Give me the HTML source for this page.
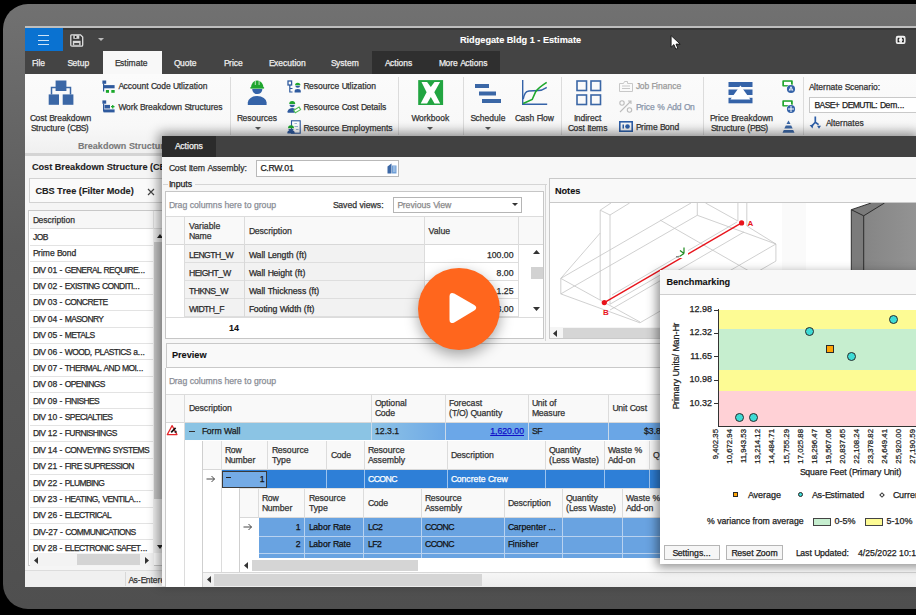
<!DOCTYPE html>
<html><head><meta charset="utf-8">
<style>
*{box-sizing:border-box;margin:0;padding:0}
html,body{width:916px;height:615px;overflow:hidden;background:#000}
body{position:relative;font-family:"Liberation Sans",sans-serif;font-size:8.5px;color:#222}
.a{position:absolute}
.t{position:absolute;white-space:nowrap;line-height:1;-webkit-text-stroke:0.25px currentColor}
svg.a{overflow:visible}
.u{letter-spacing:-0.6px}
[style*="bold"] .u{letter-spacing:-0.15px}
.t[style*="bold"]{-webkit-text-stroke:0.1px currentColor}
</style></head><body>
<div class="a" style="left:3px;top:4px;width:960px;height:605px;border-radius:25px;background:linear-gradient(#717171,#5a5a5a 40%,#4f4f4f)"></div>
<div class="a" style="left:25px;top:26px;width:891px;height:560px;background:#f2f2f2"></div>
<!-- title bar -->
<div class="a" style="left:25px;top:25.5px;width:891px;height:2.7px;background:#bebebe"></div>
<div class="a" style="left:25px;top:28px;width:891px;height:47px;background:#444"></div>
<div class="a" style="left:25px;top:28px;width:891px;height:1.8px;background:#373737"></div>
<div class="a" style="left:25px;top:28px;width:38px;height:23px;background:#0a72d1"></div>
<div class="a" style="left:38px;top:35px;width:11px;height:1.3px;background:#cfe4f7"></div>
<div class="a" style="left:38px;top:39.5px;width:11px;height:1.3px;background:#cfe4f7"></div>
<div class="a" style="left:38px;top:44px;width:11px;height:1.3px;background:#cfe4f7"></div>
<svg class="a" style="left:69.5px;top:33.5px" width="14" height="13" viewBox="0 0 14 13"><path d="M1.5 0.8H10.5L12.7 3V11Q12.7 12.2 11.5 12.2H2Q0.8 12.2 0.8 11V2Q0.8 0.8 1.5 0.8Z" fill="#3a3a3a" stroke="#e0e0e0" stroke-width="1.3"/><rect x="3.3" y="1.2" width="6" height="3.6" fill="#d8d8d8"/><circle cx="5.6" cy="2.9" r="1" fill="#111"/><rect x="2.8" y="6.8" width="7.8" height="4.8" fill="#d8d8d8"/><rect x="4.2" y="9.2" width="5" height="1.5" fill="#222"/></svg>
<svg class="a" style="left:98px;top:38px" width="6" height="4"><path d="M0 0h6l-3 3z" fill="#bbb"/></svg>
<div class="t" style="left:460px;top:36px;font-weight:bold;color:#fff;font-size:9.2px"><span class="u">R</span>idgegate <span class="u">B</span>ldg 1 - <span class="u">E</span>stimate</div>
<svg class="a" style="left:670px;top:35px" width="12" height="16" viewBox="0 0 12 16"><path d="M1.1 0.6V12.2L3.9 9.6L5.8 14.2L7.8 13.3L6 9.1H10.2Z" fill="#fff" stroke="#111" stroke-width="0.9" stroke-linejoin="round"/></svg>
<svg class="a" style="left:895px;top:35px" width="12" height="10" viewBox="0 0 12 10"><rect x="1.3" y="1.4" width="8.7" height="7.1" rx="1.5" fill="#e6e6e6" stroke="#f2f2f2" stroke-width="1.1"/><path d="M3.2 3.3v3.3h1.2M3.2 3.3h1.2M8.2 3.3v3.3h-1.2M8.2 3.3h-1.2" stroke="#1a1a1a" stroke-width="1.2" fill="none"/><circle cx="5.7" cy="4.6" r="0.8" fill="#fff"/></svg>
<!-- tabs -->
<div class="a" style="left:372px;top:51px;width:128px;height:23px;background:#2f2f2f"></div>
<div class="a" style="left:103px;top:51px;width:59px;height:24px;background:#f8f8f8"></div>
<div class="t" style="left:32px;top:59px;color:#eee"><span class="u">F</span>ile</div>
<div class="t" style="left:67.5px;top:59px;color:#eee"><span class="u">S</span>etup</div>
<div class="t" style="left:115px;top:59px;color:#333"><span class="u">E</span>stimate</div>
<div class="t" style="left:174px;top:59px;color:#eee"><span class="u">Q</span>uote</div>
<div class="t" style="left:224px;top:59px;color:#eee"><span class="u">P</span>rice</div>
<div class="t" style="left:269px;top:59px;color:#eee"><span class="u">E</span>xecution</div>
<div class="t" style="left:331px;top:59px;color:#eee"><span class="u">S</span>ystem</div>
<div class="t" style="left:385px;top:59px;color:#eee"><span class="u">A</span>ctions</div>
<div class="t" style="left:439px;top:59px;color:#eee"><span class="u">M</span>ore <span class="u">A</span>ctions</div>
<!-- ribbon -->
<div class="a" style="left:25px;top:74px;width:891px;height:80px;background:linear-gradient(#fbfbfb,#f8f8f8 65%,#efefef)"></div>
<div class="a" style="left:25px;top:153px;width:891px;height:2.5px;background:#d4d4d4"></div>
<!-- ribbon content -->
<div class="a" style="left:230px;top:77px;width:1px;height:58px;background:#dcdcdc"></div>
<div class="a" style="left:398px;top:77px;width:1px;height:58px;background:#dcdcdc"></div>
<div class="a" style="left:463px;top:77px;width:1px;height:58px;background:#dcdcdc"></div>
<div class="a" style="left:561px;top:77px;width:1px;height:58px;background:#dcdcdc"></div>
<div class="a" style="left:703px;top:77px;width:1px;height:58px;background:#dcdcdc"></div>
<div class="a" style="left:803px;top:77px;width:1px;height:58px;background:#dcdcdc"></div>
<!-- CBS icon -->
<svg class="a" style="left:48px;top:80px" width="26" height="26" viewBox="0 0 26 26" fill="#3b67a6"><rect x="7.6" y="0.5" width="10.8" height="10.5"/><path d="M3.5 14.5v-7h19v7" fill="none" stroke="#3b67a6" stroke-width="1.5"/><rect x="0.7" y="14.4" width="10.3" height="10.4"/><rect x="14.7" y="14.4" width="10.7" height="10.4"/></svg>
<div class="t" style="left:30px;top:114px;color:#333"><span class="u">C</span>ost <span class="u">B</span>reakdown</div>
<div class="t" style="left:31px;top:124px;color:#333"><span class="u">S</span>tructure (<span class="u">CBS</span>)</div>
<div class="t" style="left:78px;top:141.5px;color:#7a7a7a;font-weight:bold;font-size:9px"><span class="u">B</span>reakdown <span class="u">S</span>tructures</div>
<!-- small icons group1 -->
<svg class="a" style="left:102px;top:80px" width="14" height="14" viewBox="0 0 14 14"><rect x="0.4" y="0.5" width="3.8" height="3.3" fill="#2f5a9e"/><path d="M1.6 3.5v8" stroke="#2f5a9e" stroke-width="1.2"/><rect x="1.5" y="5.1" width="11.1" height="3.2" fill="#2f5a9e"/><rect x="3.9" y="10" width="3.1" height="2.8" fill="#1aa82a"/><rect x="9.3" y="10" width="3.4" height="2.8" fill="#1aa82a"/></svg>
<div class="t" style="left:118.5px;top:82px;color:#333"><span class="u">A</span>ccount <span class="u">C</span>ode <span class="u">U</span>tlization</div>
<svg class="a" style="left:102px;top:100px" width="14" height="14" viewBox="0 0 14 14"><rect x="0.4" y="0.4" width="3.8" height="3.3" fill="#2f5a9e"/><path d="M1.6 3.5v8" stroke="#2f5a9e" stroke-width="1.2"/><rect x="2.5" y="4.9" width="5.5" height="3.6" fill="#2f5a9e"/><path d="M9 6.7h3.5M10.75 5v3.4" stroke="#1aa82a" stroke-width="1.3"/><rect x="1.5" y="9.4" width="11.1" height="3" fill="#2f5a9e"/></svg>
<div class="t" style="left:118.5px;top:102.5px;color:#333"><span class="u">W</span>ork <span class="u">B</span>reakdown <span class="u">S</span>tructures</div>
<!-- resources -->
<svg class="a" style="left:246px;top:79px" width="22" height="27" viewBox="0 0 22 27"><path d="M4.8 9.2A6.4 7.8 0 0 1 17.6 9.2Z" fill="#1fa62e"/><path d="M9.3 2v4M13.1 2v4" stroke="#fff" stroke-width="0.7"/><rect x="4.3" y="8.2" width="13.8" height="1.3" fill="#1fa62e"/><path d="M6.2 10.1H16.4A5.1 5 0 0 1 6.2 10.1Z" fill="#3563a8"/><path d="M1.8 26V23.5A9.4 6.5 0 0 1 20.6 23.5V26Z" fill="#3563a8"/></svg>
<div class="t" style="left:237px;top:114px;color:#333"><span class="u">R</span>esources</div>
<svg class="a" style="left:254.5px;top:127px" width="6" height="4"><path d="M0 0h6l-3 3z" fill="#555"/></svg>
<svg class="a" style="left:287px;top:80px" width="14" height="13" viewBox="0 0 14 13"><rect x="1" y="1" width="3.6" height="4" fill="none" stroke="#2f5a9e" stroke-width="1.3"/><path d="M2.8 5v7h2.7M2.8 8.5h2.7" stroke="#2f5a9e" stroke-width="1.2" fill="none"/><path d="M8 5.2a2.7 2.5 0 0 1 5.4 0z" fill="#1fa62e"/><path d="M8.3 5.8h4.8a2.4 2 0 0 1-4.8 0z" fill="#2f5a9e"/><path d="M7.6 12.5v-1.3a3.1 2.3 0 0 1 6.2 0v1.3z" fill="#2f5a9e"/></svg>
<div class="t" style="left:303.5px;top:82px;color:#333"><span class="u">R</span>esource <span class="u">U</span>tlization</div>
<svg class="a" style="left:287px;top:100px" width="14" height="14" viewBox="0 0 14 14"><path d="M2.2 4a3 3 0 0 1 6 0z" fill="#1fa62e"/><path d="M2.6 4.8h5.2a2.6 2.4 0 0 1-5.2 0z" fill="#2f5a9e"/><path d="M0.6 12.8v-1.5a4.6 3.5 0 0 1 7-2.8v4.3z" fill="#2f5a9e"/><path d="M6.8 10.3l5.3-3.2 1.5 2.5-5.3 3.2z" fill="#fff" stroke="#4fbf52" stroke-width="1.1"/></svg>
<div class="t" style="left:303.5px;top:103px;color:#333"><span class="u">R</span>esource <span class="u">C</span>ost <span class="u">D</span>etails</div>
<svg class="a" style="left:287px;top:120px" width="14" height="14" viewBox="0 0 14 14"><rect x="4.5" y="0.8" width="8.7" height="12.4" fill="#fff" stroke="#2f5a9e" stroke-width="1.1"/><path d="M7.5 3.5h2.5M7.5 6.5h3.5M9 9.5h2.5" stroke="#7a9cc8" stroke-width="0.7"/><path d="M1 8.3a3 3 0 0 1 6 0z" fill="#1fa62e"/><path d="M1.4 9h5.2a2.6 2.2 0 0 1-5.2 0z" fill="#2f5a9e"/><path d="M0.4 13.6v-1a3.6 2.4 0 0 1 7.2 0v1z" fill="#2f5a9e"/></svg>
<div class="t" style="left:303.5px;top:123.5px;color:#333"><span class="u">R</span>esource <span class="u">E</span>mployments</div>
<!-- workbook -->
<svg class="a" style="left:418px;top:80px" width="26" height="25" viewBox="0 0 26 25"><rect x="0.2" y="0.1" width="24.9" height="24.9" fill="#22a541"/><path d="M3.5 2H9.1L12.8 7L16.5 2H22.1L16.3 12.2L22.2 23.4H16.5L12.8 16.9L9.1 23.4H2.7L8.6 12.2Z" fill="#fff"/></svg>
<div class="t" style="left:411.5px;top:114px;color:#333"><span class="u">W</span>orkbook</div>
<svg class="a" style="left:427px;top:127px" width="6" height="4"><path d="M0 0h6l-3 3z" fill="#555"/></svg>
<!-- schedule -->
<svg class="a" style="left:474px;top:82px" width="28" height="22"><rect x="1" y="2" width="14" height="4" fill="#3b67a6"/><rect x="5" y="9.5" width="17" height="4" fill="#3b67a6"/><rect x="8" y="17" width="19" height="4" fill="#3b67a6"/></svg>
<div class="t" style="left:470.5px;top:114px;color:#333"><span class="u">S</span>chedule</div>
<svg class="a" style="left:484.5px;top:127px" width="6" height="4"><path d="M0 0h6l-3 3z" fill="#555"/></svg>
<!-- cash flow -->
<svg class="a" style="left:521px;top:80px" width="27" height="26" viewBox="0 0 27 26"><path d="M1.7 0v24.3h24.5" stroke="#3563a8" stroke-width="1.4" fill="none"/><path d="M2.2 19C3.5 13.5 4.5 11.5 8 11L17.5 10.5C21 10.5 23 9 25.7 7.3" stroke="#3563a8" stroke-width="1.5" fill="none"/><path d="M2.2 23.5L11.2 19.5L14.8 11.5C17 8 20 6 25.7 2.3" stroke="#1ea82c" stroke-width="1.6" fill="none"/></svg>
<div class="t" style="left:515px;top:114px;color:#333"><span class="u">C</span>ash <span class="u">F</span>low</div>
<!-- indirect -->
<svg class="a" style="left:576px;top:80px" width="26" height="26" viewBox="0 0 26 26" fill="none" stroke="#3b67a6" stroke-width="1.6"><rect x="1" y="1" width="9.5" height="9.5"/><rect x="15" y="1" width="9.5" height="9.5"/><rect x="1" y="15" width="9.5" height="9.5"/><rect x="15" y="15" width="9.5" height="9.5"/></svg>
<div class="t" style="left:574px;top:114px;color:#333"><span class="u">I</span>ndirect</div>
<div class="t" style="left:568px;top:124px;color:#333"><span class="u">C</span>ost <span class="u">I</span>tems</div>
<!-- finance group -->
<svg class="a" style="left:619px;top:81px" width="14" height="11" viewBox="0 0 14 11" fill="none" stroke="#c8c8c8" stroke-width="1"><path d="M0.5 2.5h4l1-2h3v2h5v8h-13z"/><path d="M3 5h8M3 7.5h8"/></svg>
<div class="t" style="left:636px;top:82px;color:#9a9a9a"><span class="u">J</span>ob <span class="u">F</span>inance</div>
<svg class="a" style="left:619px;top:100px" width="14" height="13" viewBox="0 0 14 13" fill="none" stroke="#bdbdbd" stroke-width="1.1"><circle cx="3" cy="3" r="2.2"/><circle cx="10.5" cy="10" r="2.2"/><path d="M1 12l11-11M9 1h3v3"/></svg>
<div class="t" style="left:636px;top:102.5px;color:#8a96aa"><span class="u">P</span>rice % <span class="u">A</span>dd <span class="u">O</span>n</div>
<svg class="a" style="left:619px;top:121px" width="14" height="11" viewBox="0 0 14 11"><rect x="0.8" y="0.8" width="12.4" height="9.4" fill="none" stroke="#2d5ea8" stroke-width="1.6"/><rect x="3.5" y="3.5" width="1.5" height="4" fill="#2d5ea8"/><circle cx="8.5" cy="5.5" r="2.3" fill="#2d5ea8"/></svg>
<div class="t" style="left:636px;top:123px;color:#333"><span class="u">P</span>rime <span class="u">B</span>ond</div>
<!-- PBS -->
<svg class="a" style="left:728px;top:82px" width="25" height="22" viewBox="0 0 25 22"><rect x="0.5" y="0" width="24" height="5" fill="#3563a8"/><rect x="0.5" y="7.5" width="24" height="5.5" fill="#3563a8"/><rect x="0.5" y="15.8" width="24" height="5.5" fill="#3563a8"/><path d="M12.4 3.4L22.4 17.5H2.4Z" fill="#fff"/></svg>
<div class="t" style="left:710px;top:114px;color:#333"><span class="u">P</span>rice <span class="u">B</span>reakdown</div>
<div class="t" style="left:711px;top:124px;color:#333"><span class="u">S</span>tructure (<span class="u">PBS</span>)</div>
<svg class="a" style="left:782px;top:80px" width="14" height="14" viewBox="0 0 14 14"><rect x="0.3" y="0.3" width="10.5" height="6.3" rx="0.8" fill="#22a52f"/><rect x="2" y="1.8" width="7" height="3.3" fill="#fff"/><circle cx="9" cy="9" r="4.6" fill="#fff"/><circle cx="9" cy="9" r="4.1" fill="#3563a8"/><path d="M9 6l2.3 4.5H6.7z" fill="#fff"/><path d="M9 8v3.5" stroke="#3563a8" stroke-width="0.7"/></svg>
<svg class="a" style="left:782px;top:100px" width="14" height="14" viewBox="0 0 14 14"><rect x="0.3" y="0.3" width="10.5" height="6.3" rx="0.8" fill="#22a52f"/><rect x="2" y="1.8" width="7" height="3.3" fill="#fff"/><circle cx="9" cy="9" r="4.6" fill="#fff"/><circle cx="9" cy="9" r="4.1" fill="#3563a8"/><path d="M9 6v6M6 9h6" stroke="#fff" stroke-width="1"/></svg>
<svg class="a" style="left:782px;top:120px" width="13" height="13" viewBox="0 0 13 13"><path d="M6.5 0.5l2 3.5h-4z" fill="#3b67a6"/><path d="M3.8 5.5h5.4l1.5 3h-8.4z" fill="#3b67a6"/><path d="M1.8 10h9.4l1.3 2.8h-12z" fill="#3b67a6"/></svg>
<div class="t" style="left:809px;top:83px;color:#333"><span class="u">A</span>lternate <span class="u">S</span>cenario:</div>
<div class="a" style="left:809px;top:96.5px;width:120px;height:16px;background:#fff;border:1px solid #c9c9c9"></div>
<div class="t" style="left:814.5px;top:101px;color:#222"><span class="u">BASE</span>+ <span class="u">DEMUTIL</span>: <span class="u">D</span>em...</div>
<svg class="a" style="left:809px;top:116px" width="14" height="14" viewBox="0 0 14 14"><path d="M6.3 0.5V6.2L3 9.8M6.3 6.2L9.6 8.6" stroke="#2d5ea8" stroke-width="1.7" fill="none"/><path d="M0.6 9.2L4.4 8.4 3.6 12.5Z" fill="#2d5ea8"/><path d="M8 9.8H12L10 12.8Z" fill="#2d5ea8"/></svg>
<div class="t" style="left:826px;top:118.5px;color:#333"><span class="u">A</span>lternates</div>
<!-- left panel -->
<div class="a" style="left:25px;top:155.5px;width:140px;height:431px;background:#f5f5f5"></div>
<div class="t" style="left:32px;top:162.5px;font-weight:bold;font-size:9.2px;color:#222"><span class="u">C</span>ost <span class="u">B</span>reakdown <span class="u">S</span>tructure (<span class="u">CBS</span>)</div>
<div class="a" style="left:29px;top:178px;width:140px;height:25px;background:#fafafa;border:1px solid #d2d2d2"></div>
<div class="t" style="left:35.5px;top:186.5px;font-weight:bold;font-size:9.2px;color:#222"><span class="u">CBS</span> <span class="u">T</span>ree (<span class="u">F</span>ilter <span class="u">M</span>ode)</div>
<svg class="a" style="left:147px;top:188px" width="8" height="8"><path d="M1 1l6 6M7 1l-6 6" stroke="#444" stroke-width="1.2"/></svg>
<div class="a" style="left:28px;top:210px;width:140px;height:356px;background:#fff;border:1px solid #c8c8c8;border-left:1.5px solid #cdcdcd"></div>
<div class="a" style="left:29.5px;top:211px;width:133px;height:18px;background:#f7f7f7;border-bottom:1px solid #dadada"></div>
<div class="a" style="left:153px;top:211px;width:1px;height:18px;background:#e0e0e0"></div>
<div class="t" style="left:33px;top:216px;color:#333"><span class="u">D</span>escription</div>
<div class="a" style="left:29.5px;top:244.77px;width:123.5px;height:1px;background:#e3e3e3"></div>
<div class="t" style="left:33px;top:233.00px;color:#2a2a2a"><span class="u">JOB</span></div>
<div class="a" style="left:29.5px;top:261.14px;width:123.5px;height:1px;background:#e3e3e3"></div>
<div class="t" style="left:33px;top:249.37px;color:#2a2a2a"><span class="u">P</span>rime <span class="u">B</span>ond</div>
<div class="a" style="left:29.5px;top:277.51px;width:123.5px;height:1px;background:#e3e3e3"></div>
<div class="t" style="left:33px;top:265.74px;color:#2a2a2a"><span class="u">DIV</span> 01 - <span class="u">GENERAL</span> <span class="u">REQUIRE</span>...</div>
<div class="a" style="left:29.5px;top:293.88px;width:123.5px;height:1px;background:#e3e3e3"></div>
<div class="t" style="left:33px;top:282.11px;color:#2a2a2a"><span class="u">DIV</span> 02 - <span class="u">EXISTING</span> <span class="u">CONDITI</span>...</div>
<div class="a" style="left:29.5px;top:310.25px;width:123.5px;height:1px;background:#e3e3e3"></div>
<div class="t" style="left:33px;top:298.48px;color:#2a2a2a"><span class="u">DIV</span> 03 - <span class="u">CONCRETE</span></div>
<div class="a" style="left:29.5px;top:326.62px;width:123.5px;height:1px;background:#e3e3e3"></div>
<div class="t" style="left:33px;top:314.85px;color:#2a2a2a"><span class="u">DIV</span> 04 - <span class="u">MASONRY</span></div>
<div class="a" style="left:29.5px;top:342.99px;width:123.5px;height:1px;background:#e3e3e3"></div>
<div class="t" style="left:33px;top:331.22px;color:#2a2a2a"><span class="u">DIV</span> 05 - <span class="u">METALS</span></div>
<div class="a" style="left:29.5px;top:359.36px;width:123.5px;height:1px;background:#e3e3e3"></div>
<div class="t" style="left:33px;top:347.59px;color:#2a2a2a"><span class="u">DIV</span> 06 - <span class="u">WOOD</span>, <span class="u">PLASTICS</span> a...</div>
<div class="a" style="left:29.5px;top:375.73px;width:123.5px;height:1px;background:#e3e3e3"></div>
<div class="t" style="left:33px;top:363.96px;color:#2a2a2a"><span class="u">DIV</span> 07 - <span class="u">THERMAL</span> <span class="u">AND</span> <span class="u">MOI</span>...</div>
<div class="a" style="left:29.5px;top:392.10px;width:123.5px;height:1px;background:#e3e3e3"></div>
<div class="t" style="left:33px;top:380.33px;color:#2a2a2a"><span class="u">DIV</span> 08 - <span class="u">OPENINGS</span></div>
<div class="a" style="left:29.5px;top:408.47px;width:123.5px;height:1px;background:#e3e3e3"></div>
<div class="t" style="left:33px;top:396.70px;color:#2a2a2a"><span class="u">DIV</span> 09 - <span class="u">FINISHES</span></div>
<div class="a" style="left:29.5px;top:424.84px;width:123.5px;height:1px;background:#e3e3e3"></div>
<div class="t" style="left:33px;top:413.07px;color:#2a2a2a"><span class="u">DIV</span> 10 - <span class="u">SPECIALTIES</span></div>
<div class="a" style="left:29.5px;top:441.21px;width:123.5px;height:1px;background:#e3e3e3"></div>
<div class="t" style="left:33px;top:429.44px;color:#2a2a2a"><span class="u">DIV</span> 12 - <span class="u">FURNISHINGS</span></div>
<div class="a" style="left:29.5px;top:457.58px;width:123.5px;height:1px;background:#e3e3e3"></div>
<div class="t" style="left:33px;top:445.81px;color:#2a2a2a"><span class="u">DIV</span> 14 - <span class="u">CONVEYING</span> <span class="u">SYSTEMS</span></div>
<div class="a" style="left:29.5px;top:473.95px;width:123.5px;height:1px;background:#e3e3e3"></div>
<div class="t" style="left:33px;top:462.18px;color:#2a2a2a"><span class="u">DIV</span> 21 - <span class="u">FIRE</span> <span class="u">SUPRESSION</span></div>
<div class="a" style="left:29.5px;top:490.32px;width:123.5px;height:1px;background:#e3e3e3"></div>
<div class="t" style="left:33px;top:478.55px;color:#2a2a2a"><span class="u">DIV</span> 22 - <span class="u">PLUMBING</span></div>
<div class="a" style="left:29.5px;top:506.69px;width:123.5px;height:1px;background:#e3e3e3"></div>
<div class="t" style="left:33px;top:494.92px;color:#2a2a2a"><span class="u">DIV</span> 23 - <span class="u">HEATING</span>, <span class="u">VENTILA</span>...</div>
<div class="a" style="left:29.5px;top:523.06px;width:123.5px;height:1px;background:#e3e3e3"></div>
<div class="t" style="left:33px;top:511.29px;color:#2a2a2a"><span class="u">DIV</span> 26 - <span class="u">ELECTRICAL</span></div>
<div class="a" style="left:29.5px;top:539.43px;width:123.5px;height:1px;background:#e3e3e3"></div>
<div class="t" style="left:33px;top:527.66px;color:#2a2a2a"><span class="u">DIV</span>-27 - <span class="u">COMMUNICATIONS</span></div>
<div class="a" style="left:29.5px;top:555.80px;width:123.5px;height:1px;background:#e3e3e3"></div>
<div class="t" style="left:33px;top:544.03px;color:#2a2a2a"><span class="u">DIV</span> 28 - <span class="u">ELECTRONIC</span> <span class="u">SAFET</span>...</div>
<div class="a" style="left:153px;top:229px;width:10px;height:324px;background:#f0f0f0"></div>
<div class="a" style="left:153.5px;top:242px;width:9px;height:257px;background:#c9c9c9"></div>
<svg class="a" style="left:156.5px;top:233.5px" width="6" height="4"><path d="M0 4h6l-3-4z" fill="#222"/></svg>
<svg class="a" style="left:156.5px;top:545px" width="6" height="4"><path d="M0 0h6l-3 4z" fill="#222"/></svg>
<div class="a" style="left:29.5px;top:553px;width:124px;height:13px;background:#f3f3f3"></div>
<div class="a" style="left:77px;top:554px;width:62.5px;height:11px;background:#d4d4d4"></div>
<svg class="a" style="left:34px;top:556.5px" width="5" height="7"><path d="M4 0v7l-4-3.5z" fill="#333"/></svg>
<svg class="a" style="left:144.5px;top:556.5px" width="5" height="7"><path d="M0 0v7l4-3.5z" fill="#333"/></svg>
<div class="a" style="left:25px;top:569.5px;width:140px;height:1px;background:#dcdcdc"></div>
<div class="a" style="left:25px;top:570.5px;width:140px;height:16px;background:#f0f0f0"></div>
<div class="a" style="left:124.5px;top:572px;width:1px;height:14px;background:#d8d8d8"></div>
<div class="t" style="left:128.5px;top:576px;color:#333"><span class="u">A</span>s-<span class="u">E</span>ntered</div>
<!-- actions window -->
<div class="a" style="left:162px;top:136px;width:760px;height:450px;background:#f7f7f7;box-shadow:-3px -3px 11px rgba(0,0,0,0.45)"></div>
<div class="a" style="left:162px;top:136px;width:754px;height:21px;background:#414141"></div>
<div class="a" style="left:162px;top:136px;width:54px;height:21px;background:#2b2b2b"></div>
<div class="t" style="left:175px;top:141.5px;color:#f2f2f2;font-size:8.7px"><span class="u">A</span>ctions</div>
<div class="t" style="left:169px;top:164px;color:#333;font-size:8.7px"><span class="u">C</span>ost <span class="u">I</span>tem <span class="u">A</span>ssembly:</div>
<div class="a" style="left:255.5px;top:160px;width:143.5px;height:16.5px;background:#fff;border:1px solid #b9b9b9"></div>
<div class="t" style="left:260.5px;top:164px;color:#222;font-size:8.7px"><span class="u">C</span>.<span class="u">RW</span>.01</div>
<svg class="a" style="left:387px;top:162.5px" width="10" height="11" viewBox="0 0 10 11"><path d="M0.5 10.5v-7l4-3v10z" fill="#3b67a6"/><path d="M5 10.5v-8h4.5v8z" fill="#6f9fd6"/><path d="M6 4h2.5M6 6h2.5M6 8h2.5" stroke="#fff" stroke-width="0.6"/></svg>
<div class="t" style="left:169px;top:179.5px;color:#222;font-size:8.7px"><span class="u">I</span>nputs</div>
<div class="a" style="left:163px;top:183.5px;width:5px;height:1px;background:#d5d5d5"></div>
<div class="a" style="left:195px;top:183.5px;width:352px;height:1px;background:#d5d5d5"></div>
<div class="a" style="left:165px;top:191px;width:379px;height:147.5px;background:#fff;border:1px solid #c6c6c6"></div>
<div class="t" style="left:169px;top:201px;color:#8a8e96;font-size:8.7px"><span class="u">D</span>rag columns here to group</div>
<div class="t" style="left:333px;top:201px;color:#333;font-size:8.7px"><span class="u">S</span>aved views:</div>
<div class="a" style="left:393px;top:196.5px;width:129px;height:16.5px;background:#fff;border:1px solid #b5b5b5"></div>
<div class="t" style="left:397.5px;top:201px;color:#8a8a8a;font-size:8.7px"><span class="u">P</span>revious <span class="u">V</span>iew</div>
<svg class="a" style="left:511.5px;top:203px" width="6" height="4"><path d="M0 0h6l-3 3z" fill="#333"/></svg>
<div class="a" style="left:166px;top:216px;width:377px;height:29px;background:#f9f9f9;border-top:1px solid #dcdcdc;border-bottom:1px solid #d8d8d8"></div>
<div class="a" style="left:184px;top:216px;width:1px;height:101px;background:#dcdcdc"></div>
<div class="a" style="left:244px;top:216px;width:1px;height:101px;background:#dcdcdc"></div>
<div class="a" style="left:424px;top:216px;width:1px;height:101px;background:#dcdcdc"></div>
<div class="a" style="left:518px;top:216px;width:1px;height:101px;background:#dcdcdc"></div>
<div class="t" style="left:189px;top:222px;color:#333;font-size:8.7px"><span class="u">V</span>ariable</div>
<div class="t" style="left:189px;top:232px;color:#333;font-size:8.7px"><span class="u">N</span>ame</div>
<div class="t" style="left:249px;top:227px;color:#333;font-size:8.7px"><span class="u">D</span>escription</div>
<div class="t" style="left:428.5px;top:227px;color:#333;font-size:8.7px"><span class="u">V</span>alue</div>
<div class="a" style="left:185px;top:245px;width:239px;height:18px;background:#f2f2f2;border-bottom:1px solid #dedede"></div>
<div class="a" style="left:425px;top:245px;width:93px;height:18px;background:#fff;border-bottom:1px solid #dedede"></div>
<div class="a" style="left:244px;top:245px;width:1px;height:18px;background:#d8d8d8"></div>
<div class="t" style="left:189px;top:250.5px;color:#2a2a2a;font-size:8.7px"><span class="u">LENGTH</span>_<span class="u">W</span></div>
<div class="t" style="left:249px;top:250.5px;color:#2a2a2a;font-size:8.7px"><span class="u">W</span>all <span class="u">L</span>ength (ft)</div>
<div class="t" style="right:402.5px;top:250.5px;color:#2a2a2a;font-size:8.7px">100.00</div>
<div class="a" style="left:185px;top:263px;width:239px;height:18px;background:#f2f2f2;border-bottom:1px solid #dedede"></div>
<div class="a" style="left:425px;top:263px;width:93px;height:18px;background:#fff;border-bottom:1px solid #dedede"></div>
<div class="a" style="left:244px;top:263px;width:1px;height:18px;background:#d8d8d8"></div>
<div class="t" style="left:189px;top:268.5px;color:#2a2a2a;font-size:8.7px"><span class="u">HEIGHT</span>_<span class="u">W</span></div>
<div class="t" style="left:249px;top:268.5px;color:#2a2a2a;font-size:8.7px"><span class="u">W</span>all <span class="u">H</span>eight (ft)</div>
<div class="t" style="right:402.5px;top:268.5px;color:#2a2a2a;font-size:8.7px">8.00</div>
<div class="a" style="left:185px;top:281px;width:239px;height:18px;background:#f2f2f2;border-bottom:1px solid #dedede"></div>
<div class="a" style="left:425px;top:281px;width:93px;height:18px;background:#fff;border-bottom:1px solid #dedede"></div>
<div class="a" style="left:244px;top:281px;width:1px;height:18px;background:#d8d8d8"></div>
<div class="t" style="left:189px;top:286.5px;color:#2a2a2a;font-size:8.7px"><span class="u">THKNS</span>_<span class="u">W</span></div>
<div class="t" style="left:249px;top:286.5px;color:#2a2a2a;font-size:8.7px"><span class="u">W</span>all <span class="u">T</span>hickness (ft)</div>
<div class="t" style="right:402.5px;top:286.5px;color:#2a2a2a;font-size:8.7px">1.25</div>
<div class="a" style="left:185px;top:299px;width:239px;height:18px;background:#f2f2f2;border-bottom:1px solid #dedede"></div>
<div class="a" style="left:425px;top:299px;width:93px;height:18px;background:#fff;border-bottom:1px solid #dedede"></div>
<div class="a" style="left:244px;top:299px;width:1px;height:18px;background:#d8d8d8"></div>
<div class="t" style="left:189px;top:304.5px;color:#2a2a2a;font-size:8.7px"><span class="u">WIDTH</span>_<span class="u">F</span></div>
<div class="t" style="left:249px;top:304.5px;color:#2a2a2a;font-size:8.7px"><span class="u">F</span>ooting <span class="u">W</span>idth (ft)</div>
<div class="t" style="right:402.5px;top:304.5px;color:#2a2a2a;font-size:8.7px">3.00</div>
<div class="a" style="left:166px;top:317px;width:377px;height:1px;background:#dcdcdc"></div>
<div class="t" style="left:229px;top:323.5px;color:#111;font-weight:bold;font-size:9px">14</div>
<svg class="a" style="left:533px;top:250px" width="7" height="5"><path d="M0 4h7l-3.5-4z" fill="#333"/></svg>
<svg class="a" style="left:533px;top:307px" width="7" height="5"><path d="M0 0h7l-3.5 4z" fill="#333"/></svg>
<div class="a" style="left:530.5px;top:267px;width:12.5px;height:12px;background:#d2d2d2"></div>
<div class="a" style="left:165.5px;top:343px;width:760px;height:24.5px;background:#f9f9f9;border:1px solid #c9c9c9"></div>
<div class="t" style="left:172px;top:350.5px;color:#111;font-weight:bold;font-size:9.2px"><span class="u">P</span>review</div>
<div class="a" style="left:164.5px;top:367.5px;width:760px;height:219px;background:#fff;border-left:1.5px solid #c9c9c9"></div>
<div class="t" style="left:169px;top:377px;color:#8a8e96;font-size:8.7px"><span class="u">D</span>rag columns here to group</div>
<div class="a" style="left:166px;top:394px;width:750px;height:29px;background:#f9f9f9;border-top:1px solid #dcdcdc;border-bottom:1px solid #d8d8d8"></div>
<div class="a" style="left:184px;top:394px;width:1px;height:192px;background:#dcdcdc"></div>
<div class="a" style="left:370.5px;top:394px;width:1px;height:29px;background:#dcdcdc"></div>
<div class="a" style="left:444.5px;top:394px;width:1px;height:29px;background:#dcdcdc"></div>
<div class="a" style="left:527.7px;top:394px;width:1px;height:29px;background:#dcdcdc"></div>
<div class="a" style="left:608px;top:394px;width:1px;height:29px;background:#dcdcdc"></div>
<div class="t" style="left:189px;top:404px;color:#333;font-size:8.7px"><span class="u">D</span>escription</div>
<div class="t" style="left:375px;top:399px;color:#333;font-size:8.7px"><span class="u">O</span>ptional</div>
<div class="t" style="left:375px;top:409px;color:#333;font-size:8.7px"><span class="u">C</span>ode</div>
<div class="t" style="left:449px;top:399px;color:#333;font-size:8.7px"><span class="u">F</span>orecast</div>
<div class="t" style="left:449px;top:409px;color:#333;font-size:8.7px">(<span class="u">T</span>/<span class="u">O</span>) <span class="u">Q</span>uantity</div>
<div class="t" style="left:532px;top:399px;color:#333;font-size:8.7px"><span class="u">U</span>nit of</div>
<div class="t" style="left:532px;top:409px;color:#333;font-size:8.7px"><span class="u">M</span>easure</div>
<div class="t" style="left:612.5px;top:404px;color:#333;font-size:8.7px"><span class="u">U</span>nit <span class="u">C</span>ost</div>
<div class="a" style="left:184.5px;top:423px;width:186px;height:17px;background:#8bc4e4"></div>
<div class="a" style="left:371px;top:423px;width:73.5px;height:17px;background:linear-gradient(90deg,#8ec3e6,#6ea9e6)"></div>
<div class="a" style="left:445px;top:423px;width:82.5px;height:17px;background:#6ba7e8"></div>
<div class="a" style="left:528px;top:423px;width:80px;height:17px;background:#6aa6e6"></div>
<div class="a" style="left:608.5px;top:423px;width:60px;height:17px;background:#6aa6e6"></div>
<div class="a" style="left:370.5px;top:423px;width:1px;height:17px;background:#c9d9e9"></div>
<div class="a" style="left:444.5px;top:423px;width:1px;height:17px;background:#c9d9e9"></div>
<div class="a" style="left:527.7px;top:423px;width:1px;height:17px;background:#c9d9e9"></div>
<div class="a" style="left:608px;top:423px;width:1px;height:17px;background:#c9d9e9"></div>
<div class="a" style="left:189px;top:431px;width:6px;height:1.2px;background:#333"></div>
<div class="t" style="left:202px;top:427px;color:#1a1a1a;font-size:8.7px"><span class="u">F</span>orm <span class="u">W</span>all</div>
<svg class="a" style="left:166px;top:424px" width="12" height="12" viewBox="0 0 12 12"><path d="M6.1 1.6L1.3 10.6H11Z" fill="none" stroke="#e4262a" stroke-width="1.2" stroke-linejoin="round"/><path d="M5.2 8.3L9.6 3.8" stroke="#111" stroke-width="1.7"/><rect x="8.6" y="6.8" width="2" height="2" fill="#222"/></svg>
<div class="t" style="left:375px;top:427px;color:#1a1a1a;font-size:8.7px">12.3.1</div>
<div class="t" style="right:392px;top:427px;color:#1010c8;font-size:8.7px;text-decoration:underline">1,620.00</div>
<div class="t" style="left:532px;top:427px;color:#1a1a1a;font-size:8.7px"><span class="u">SF</span></div>
<div class="t" style="left:644px;top:427px;color:#1a1a1a;font-size:8.7px">$3.85</div>
<!-- band 1 -->
<div class="a" style="left:202px;top:440.5px;width:720px;height:146px;background:#fff;border-left:1px solid #cfcfcf"></div>
<div class="a" style="left:202.5px;top:441px;width:720px;height:29px;background:#f9f9f9;border-bottom:1px solid #d8d8d8"></div>
<div class="a" style="left:221px;top:441px;width:1px;height:47px;background:#dcdcdc"></div>
<div class="a" style="left:267px;top:441px;width:1px;height:47px;background:#dcdcdc"></div>
<div class="a" style="left:326px;top:441px;width:1px;height:47px;background:#dcdcdc"></div>
<div class="a" style="left:364px;top:441px;width:1px;height:47px;background:#dcdcdc"></div>
<div class="a" style="left:446.5px;top:441px;width:1px;height:47px;background:#dcdcdc"></div>
<div class="a" style="left:544.5px;top:441px;width:1px;height:47px;background:#dcdcdc"></div>
<div class="a" style="left:603.5px;top:441px;width:1px;height:47px;background:#dcdcdc"></div>
<div class="a" style="left:648.7px;top:441px;width:1px;height:47px;background:#dcdcdc"></div>
<div class="a" style="left:221px;top:488px;width:1px;height:84px;background:#dcdcdc"></div>
<div class="t" style="left:225px;top:446px;color:#333;font-size:8.7px"><span class="u">R</span>ow</div>
<div class="t" style="left:225px;top:456px;color:#333;font-size:8.7px"><span class="u">N</span>umber</div>
<div class="t" style="left:272px;top:446px;color:#333;font-size:8.7px"><span class="u">R</span>esource</div>
<div class="t" style="left:272px;top:456px;color:#333;font-size:8.7px"><span class="u">T</span>ype</div>
<div class="t" style="left:331px;top:451px;color:#333;font-size:8.7px"><span class="u">C</span>ode</div>
<div class="t" style="left:368px;top:446px;color:#333;font-size:8.7px"><span class="u">R</span>esource</div>
<div class="t" style="left:368px;top:456px;color:#333;font-size:8.7px"><span class="u">A</span>ssembly</div>
<div class="t" style="left:451px;top:451px;color:#333;font-size:8.7px"><span class="u">D</span>escription</div>
<div class="t" style="left:549px;top:446px;color:#333;font-size:8.7px"><span class="u">Q</span>uantity</div>
<div class="t" style="left:549px;top:456px;color:#333;font-size:8.7px">(<span class="u">L</span>ess <span class="u">W</span>aste)</div>
<div class="t" style="left:608px;top:446px;color:#333;font-size:8.7px"><span class="u">W</span>aste %</div>
<div class="t" style="left:608px;top:456px;color:#333;font-size:8.7px"><span class="u">A</span>dd-on</div>
<div class="t" style="left:653px;top:451px;color:#333;font-size:8.7px"><span class="u">Q</span></div>
<div class="a" style="left:222px;top:470px;width:450px;height:18px;background:#2e7fd7"></div>
<div class="a" style="left:221.5px;top:470.5px;width:45.5px;height:17px;background:#74abe6;border:1px solid #3a3a3a"></div>
<div class="a" style="left:326px;top:470px;width:1px;height:18px;background:#9cc3ee"></div>
<div class="a" style="left:364px;top:470px;width:1px;height:18px;background:#9cc3ee"></div>
<div class="a" style="left:446.5px;top:470px;width:1px;height:18px;background:#9cc3ee"></div>
<div class="a" style="left:544.5px;top:470px;width:1px;height:18px;background:#9cc3ee"></div>
<div class="a" style="left:603.5px;top:470px;width:1px;height:18px;background:#9cc3ee"></div>
<div class="a" style="left:648.7px;top:470px;width:1px;height:18px;background:#9cc3ee"></div>
<svg class="a" style="left:206px;top:475px" width="10" height="8"><path d="M0.5 4h8M5.5 1l3 3-3 3" fill="none" stroke="#333" stroke-width="0.9"/></svg>
<div class="a" style="left:226px;top:477px;width:5px;height:1.2px;background:#222"></div>
<div class="t" style="right:651.5px;top:474.5px;color:#111;font-size:8.7px">1</div>
<div class="t" style="left:368px;top:474.5px;color:#fff;font-size:8.7px"><span class="u">CCONC</span></div>
<div class="t" style="left:451px;top:474.5px;color:#fff;font-size:8.7px"><span class="u">C</span>oncrete <span class="u">C</span>rew</div>
<!-- band 2 -->
<div class="a" style="left:239px;top:488px;width:700px;height:84px;background:#fff;border-left:1px solid #cfcfcf;border-top:1px solid #e0e0e0"></div>
<div class="a" style="left:239.5px;top:489px;width:700px;height:29px;background:#f9f9f9;border-bottom:1px solid #d8d8d8"></div>
<div class="a" style="left:258px;top:489px;width:1px;height:29px;background:#dcdcdc"></div>
<div class="a" style="left:304px;top:489px;width:1px;height:29px;background:#dcdcdc"></div>
<div class="a" style="left:363px;top:489px;width:1px;height:29px;background:#dcdcdc"></div>
<div class="a" style="left:421px;top:489px;width:1px;height:29px;background:#dcdcdc"></div>
<div class="a" style="left:504px;top:489px;width:1px;height:29px;background:#dcdcdc"></div>
<div class="a" style="left:562px;top:489px;width:1px;height:29px;background:#dcdcdc"></div>
<div class="a" style="left:622px;top:489px;width:1px;height:29px;background:#dcdcdc"></div>
<div class="t" style="left:262px;top:494px;color:#333;font-size:8.7px"><span class="u">R</span>ow</div>
<div class="t" style="left:262px;top:504px;color:#333;font-size:8.7px"><span class="u">N</span>umber</div>
<div class="t" style="left:309px;top:494px;color:#333;font-size:8.7px"><span class="u">R</span>esource</div>
<div class="t" style="left:309px;top:504px;color:#333;font-size:8.7px"><span class="u">T</span>ype</div>
<div class="t" style="left:368px;top:499px;color:#333;font-size:8.7px"><span class="u">C</span>ode</div>
<div class="t" style="left:425px;top:494px;color:#333;font-size:8.7px"><span class="u">R</span>esource</div>
<div class="t" style="left:425px;top:504px;color:#333;font-size:8.7px"><span class="u">A</span>ssembly</div>
<div class="t" style="left:508px;top:499px;color:#333;font-size:8.7px"><span class="u">D</span>escription</div>
<div class="t" style="left:566px;top:494px;color:#333;font-size:8.7px"><span class="u">Q</span>uantity</div>
<div class="t" style="left:566px;top:504px;color:#333;font-size:8.7px">(<span class="u">L</span>ess <span class="u">W</span>aste)</div>
<div class="t" style="left:626px;top:494px;color:#333;font-size:8.7px"><span class="u">W</span>aste %</div>
<div class="t" style="left:626px;top:504px;color:#333;font-size:8.7px"><span class="u">A</span>dd-on</div>
<div class="a" style="left:258.5px;top:518px;width:420px;height:40px;background:#69a3e1"></div>
<div class="a" style="left:258.5px;top:535.5px;width:420px;height:1px;background:#b8d2f0"></div>
<div class="a" style="left:258.5px;top:553px;width:420px;height:1px;background:#b8d2f0"></div>
<div class="a" style="left:304px;top:518px;width:1px;height:40px;background:#b8d2f0"></div>
<div class="a" style="left:363px;top:518px;width:1px;height:40px;background:#b8d2f0"></div>
<div class="a" style="left:421px;top:518px;width:1px;height:40px;background:#b8d2f0"></div>
<div class="a" style="left:504px;top:518px;width:1px;height:40px;background:#b8d2f0"></div>
<div class="a" style="left:562px;top:518px;width:1px;height:40px;background:#b8d2f0"></div>
<div class="a" style="left:622px;top:518px;width:1px;height:40px;background:#b8d2f0"></div>
<svg class="a" style="left:243px;top:523px" width="10" height="8"><path d="M0.5 4h8M5.5 1l3 3-3 3" fill="none" stroke="#333" stroke-width="0.9"/></svg>
<div class="t" style="right:615.5px;top:522.5px;color:#111;font-size:8.7px">1</div>
<div class="t" style="left:309px;top:522.5px;color:#111;font-size:8.7px"><span class="u">L</span>abor <span class="u">R</span>ate</div>
<div class="t" style="left:368px;top:522.5px;color:#111;font-size:8.7px"><span class="u">LC</span>2</div>
<div class="t" style="left:425px;top:522.5px;color:#111;font-size:8.7px"><span class="u">CCONC</span></div>
<div class="t" style="left:508px;top:522.5px;color:#111;font-size:8.7px"><span class="u">C</span>arpenter ...</div>
<div class="t" style="right:615.5px;top:540.2px;color:#111;font-size:8.7px">2</div>
<div class="t" style="left:309px;top:540.2px;color:#111;font-size:8.7px"><span class="u">L</span>abor <span class="u">R</span>ate</div>
<div class="t" style="left:368px;top:540.2px;color:#111;font-size:8.7px"><span class="u">LF</span>2</div>
<div class="t" style="left:425px;top:540.2px;color:#111;font-size:8.7px"><span class="u">CCONC</span></div>
<div class="t" style="left:508px;top:540.2px;color:#111;font-size:8.7px"><span class="u">F</span>inisher</div>
<div class="a" style="left:240px;top:558px;width:700px;height:14px;background:#fff"></div>
<div class="a" style="left:252px;top:559.5px;width:166px;height:11.5px;background:#d5d5d5"></div>
<svg class="a" style="left:244px;top:562px" width="5" height="7"><path d="M4 0v7l-4-3.5z" fill="#333"/></svg>
<div class="a" style="left:203px;top:572px;width:720px;height:15px;background:linear-gradient(#f6f6f6,#ececec);border-top:1px solid #d8d8d8"></div>
<div class="a" style="left:214px;top:573.5px;width:268px;height:12px;background:#d5d5d5"></div>
<svg class="a" style="left:206.5px;top:576px" width="5" height="7"><path d="M4 0v7l-4-3.5z" fill="#333"/></svg>
<!-- notes -->
<div class="a" style="left:545px;top:183.5px;width:1px;height:157px;background:#d5d5d5"></div>
<div class="a" style="left:549px;top:178px;width:380px;height:25px;background:#f9f9f9;border:1px solid #c9c9c9"></div>
<div class="t" style="left:555px;top:186.5px;color:#111;font-weight:bold;font-size:9.2px"><span class="u">N</span>otes</div>
<div class="a" style="left:549px;top:203px;width:380px;height:136px;background:#fff;border-left:1px solid #c9c9c9;border-bottom:1px solid #c9c9c9"></div>
<div class="a" style="left:782px;top:203px;width:24px;height:124px;background:#fafafa"></div>
<div class="a" style="left:550px;top:327px;width:370px;height:11px;background:#f5f5f5"></div>
<div class="a" style="left:562.5px;top:328px;width:120px;height:10px;background:#d5d5d5"></div>
<svg class="a" style="left:553px;top:329.5px" width="5" height="7"><path d="M4 0v7l-4-3.5z" fill="#333"/></svg>
<svg class="a" style="left:0;top:0" width="916" height="615"><defs><clipPath id="nc"><rect x="550" y="203" width="366" height="124"/></clipPath></defs><g clip-path="url(#nc)" stroke="#c4c4c4" stroke-width="0.8" fill="none"><line x1="600.2" y1="210.2" x2="600.2" y2="300.1"/><line x1="610" y1="215" x2="610" y2="304.2"/><line x1="600.2" y1="210.2" x2="610" y2="215"/><line x1="600.2" y1="210.2" x2="611" y2="203"/><line x1="610" y1="215" x2="629.6" y2="203"/><line x1="560.8" y1="278.4" x2="600.2" y2="233"/><line x1="560.8" y1="278.4" x2="691" y2="203"/><line x1="560.8" y1="293.9" x2="697.3" y2="215.3"/><line x1="560.8" y1="278.4" x2="560.8" y2="293.9"/><line x1="560.8" y1="278.4" x2="600.2" y2="300.1"/><line x1="560.8" y1="293.9" x2="639.9" y2="322.8"/><line x1="610" y1="304.2" x2="669" y2="270"/><line x1="600.2" y1="300.1" x2="640" y2="322"/><line x1="639.9" y1="322.8" x2="775.9" y2="244"/><line x1="697.3" y1="215.3" x2="697.3" y2="203"/><line x1="697.3" y1="215.3" x2="775.9" y2="244"/><line x1="775.9" y1="244" x2="775.9" y2="261.1"/><line x1="737.9" y1="203" x2="737.9" y2="221"/><line x1="746.8" y1="203" x2="746.8" y2="226"/><line x1="705.5" y1="203" x2="737.9" y2="221"/><line x1="746.8" y1="226" x2="775.9" y2="244"/><line x1="612" y1="295" x2="737" y2="222"/><line x1="610" y1="310" x2="744" y2="232"/><line x1="775.9" y1="261.1" x2="700" y2="305"/><line x1="660" y1="220" x2="749" y2="271"/><path d="M851.3 209.7L871 203H916V270H851.3Z" fill="#7b7b7b" stroke="none"/><path d="M863.7 215.8L884.5 203H916V270H863.7Z" fill="url(#bg)" stroke="none"/><path d="M851.3 209.7L871 203M851.3 209.7L863.7 215.8L884.5 203M851.3 209.7V270M863.7 215.8V270" stroke="#222" stroke-width="0.9"/></g><defs><linearGradient id="bg" x1="0" x2="1"><stop offset="0" stop-color="#858585"/><stop offset="1" stop-color="#939393"/></linearGradient></defs><line x1="604.3" y1="302.6" x2="741.6" y2="222.9" stroke="#e8141c" stroke-width="1.4"/><circle cx="604.3" cy="302.6" r="2.6" fill="#e8141c"/><circle cx="741.6" cy="222.9" r="2.6" fill="#e8141c"/><text x="747.5" y="226" font-family="Liberation Sans" font-size="8" font-weight="bold" fill="#e8141c">A</text><text x="603" y="315" font-family="Liberation Sans" font-size="8" font-weight="bold" fill="#e8141c">B</text><rect x="679" y="247" width="9" height="11" fill="#fff"/><path d="M684 253.5l-4.5 3M684 253.5v-6M684 253.5l-4 -3" stroke="#1e8a1e" stroke-width="1.2" fill="none"/><rect x="676" y="256" width="3" height="1.5" fill="#888"/></svg>
<!-- benchmarking -->
<div class="a" style="left:660px;top:270px;width:270px;height:294px;background:#fff;box-shadow:-3px 3px 10px rgba(0,0,0,0.45)"></div>
<div class="a" style="left:660px;top:270px;width:270px;height:25px;background:#f8f8f8;border-bottom:1px solid #cfcfcf"></div>
<div class="t" style="left:666.5px;top:277.5px;color:#111;font-weight:bold;font-size:9.2px"><span class="u">B</span>enchmarking</div>
<div class="a" style="left:718px;top:310px;width:200px;height:18.5px;background:#fdfb94"></div>
<div class="a" style="left:718px;top:328.5px;width:200px;height:41.5px;background:#c6eecf"></div>
<div class="a" style="left:718px;top:370px;width:200px;height:21px;background:#fdfb94"></div>
<div class="a" style="left:718px;top:391px;width:200px;height:35px;background:#ffd1d6"></div>
<div class="a" style="left:717.5px;top:309px;width:1px;height:118px;background:#333"></div>
<div class="a" style="left:717.5px;top:426px;width:200px;height:1px;background:#333"></div>
<div class="t" style="right:204px;top:305.0px;color:#222;font-size:9px">12.98</div>
<div class="a" style="left:713.5px;top:309.5px;width:4px;height:1px;background:#333"></div>
<div class="t" style="right:204px;top:328.45px;color:#222;font-size:9px">12.32</div>
<div class="a" style="left:713.5px;top:332.95px;width:4px;height:1px;background:#333"></div>
<div class="t" style="right:204px;top:351.9px;color:#222;font-size:9px">11.65</div>
<div class="a" style="left:713.5px;top:356.4px;width:4px;height:1px;background:#333"></div>
<div class="t" style="right:204px;top:375.35px;color:#222;font-size:9px">10.98</div>
<div class="a" style="left:713.5px;top:379.85px;width:4px;height:1px;background:#333"></div>
<div class="t" style="right:204px;top:398.8px;color:#222;font-size:9px">10.32</div>
<div class="a" style="left:713.5px;top:403.3px;width:4px;height:1px;background:#333"></div>
<div class="t" style="left:676px;top:366px;color:#222;font-size:9px;transform:translate(-50%,-50%) rotate(-90deg)"><span class="u">P</span>rimary <span class="u">U</span>nits/ <span class="u">M</span>an-<span class="u">H</span>r</div>
<div class="t" style="left:716.3px;top:428.5px;color:#222;font-size:7.8px;transform-origin:0 0;transform:rotate(-90deg) translate(-100%,-50%)">9,402.35</div>
<div class="t" style="left:730.3399999999999px;top:428.5px;color:#222;font-size:7.8px;transform-origin:0 0;transform:rotate(-90deg) translate(-100%,-50%)">10,672.94</div>
<div class="t" style="left:744.38px;top:428.5px;color:#222;font-size:7.8px;transform-origin:0 0;transform:rotate(-90deg) translate(-100%,-50%)">11,943.53</div>
<div class="t" style="left:758.42px;top:428.5px;color:#222;font-size:7.8px;transform-origin:0 0;transform:rotate(-90deg) translate(-100%,-50%)">13,214.12</div>
<div class="t" style="left:772.4599999999999px;top:428.5px;color:#222;font-size:7.8px;transform-origin:0 0;transform:rotate(-90deg) translate(-100%,-50%)">14,484.71</div>
<div class="t" style="left:786.5px;top:428.5px;color:#222;font-size:7.8px;transform-origin:0 0;transform:rotate(-90deg) translate(-100%,-50%)">15,755.29</div>
<div class="t" style="left:800.54px;top:428.5px;color:#222;font-size:7.8px;transform-origin:0 0;transform:rotate(-90deg) translate(-100%,-50%)">17,025.88</div>
<div class="t" style="left:814.5799999999999px;top:428.5px;color:#222;font-size:7.8px;transform-origin:0 0;transform:rotate(-90deg) translate(-100%,-50%)">18,296.47</div>
<div class="t" style="left:828.6199999999999px;top:428.5px;color:#222;font-size:7.8px;transform-origin:0 0;transform:rotate(-90deg) translate(-100%,-50%)">19,567.06</div>
<div class="t" style="left:842.66px;top:428.5px;color:#222;font-size:7.8px;transform-origin:0 0;transform:rotate(-90deg) translate(-100%,-50%)">20,837.65</div>
<div class="t" style="left:856.6999999999999px;top:428.5px;color:#222;font-size:7.8px;transform-origin:0 0;transform:rotate(-90deg) translate(-100%,-50%)">22,108.24</div>
<div class="t" style="left:870.74px;top:428.5px;color:#222;font-size:7.8px;transform-origin:0 0;transform:rotate(-90deg) translate(-100%,-50%)">23,378.82</div>
<div class="t" style="left:884.78px;top:428.5px;color:#222;font-size:7.8px;transform-origin:0 0;transform:rotate(-90deg) translate(-100%,-50%)">24,649.41</div>
<div class="t" style="left:898.8199999999999px;top:428.5px;color:#222;font-size:7.8px;transform-origin:0 0;transform:rotate(-90deg) translate(-100%,-50%)">25,920.00</div>
<div class="t" style="left:912.8599999999999px;top:428.5px;color:#222;font-size:7.8px;transform-origin:0 0;transform:rotate(-90deg) translate(-100%,-50%)">27,190.59</div>
<div class="t" style="left:800px;top:467.5px;color:#222;font-size:8.7px"><span class="u">S</span>quare <span class="u">F</span>eet (<span class="u">P</span>rimary <span class="u">U</span>nit)</div>
<div class="a" style="left:805.0px;top:327.2px;width:9px;height:9px;border-radius:50%;background:#3ddbd5;border:1.2px solid #2a2a2a"></div>
<div class="a" style="left:846.5px;top:352.0px;width:9px;height:9px;border-radius:50%;background:#3ddbd5;border:1.2px solid #2a2a2a"></div>
<div class="a" style="left:888.9px;top:314.9px;width:9px;height:9px;border-radius:50%;background:#3ddbd5;border:1.2px solid #2a2a2a"></div>
<div class="a" style="left:735.3px;top:412.5px;width:9px;height:9px;border-radius:50%;background:#3ddbd5;border:1.2px solid #2a2a2a"></div>
<div class="a" style="left:749.4px;top:412.5px;width:9px;height:9px;border-radius:50%;background:#3ddbd5;border:1.2px solid #2a2a2a"></div>
<div class="a" style="left:825.5px;top:344.5px;width:8.5px;height:8.5px;background:#ffa406;border:1px solid #2a2a2a"></div>
<div class="a" style="left:733px;top:492px;width:5px;height:5px;background:#ffa406;border:1px solid #2a2a2a"></div>
<div class="t" style="left:748px;top:490.5px;color:#222;font-size:9px"><span class="u">A</span>verage</div>
<div class="a" style="left:797.5px;top:492px;width:5px;height:5px;border-radius:50%;background:#3ddbd5;border:1px solid #222"></div>
<div class="t" style="left:812px;top:490.5px;color:#222;font-size:9px"><span class="u">A</span>s-<span class="u">E</span>stimated</div>
<div class="a" style="left:880px;top:492.5px;width:4px;height:4px;transform:rotate(45deg);background:#fff;border:1px solid #333"></div>
<div class="t" style="left:893px;top:490.5px;color:#222;font-size:9px"><span class="u">C</span>urrent</div>
<div class="t" style="left:707px;top:517px;color:#222;font-size:8.7px">% variance from average</div>
<div class="a" style="left:813px;top:518px;width:18px;height:7.5px;background:#c6eecf;border:1px solid #444"></div>
<div class="t" style="left:834.5px;top:517px;color:#222;font-size:9px">0-5%</div>
<div class="a" style="left:865px;top:518px;width:18px;height:7.5px;background:#fdfb94;border:1px solid #444"></div>
<div class="t" style="left:886.5px;top:517px;color:#222;font-size:9px">5-10%</div>
<div class="a" style="left:663.5px;top:545px;width:56.5px;height:15px;background:#f6f6f6;border:1px solid #b5b5b5"></div>
<div class="t" style="left:672.5px;top:549px;color:#222;font-size:8.7px"><span class="u">S</span>ettings...</div>
<div class="a" style="left:726px;top:545px;width:57px;height:15px;background:#f6f6f6;border:1px solid #b5b5b5"></div>
<div class="t" style="left:731.5px;top:549px;color:#222;font-size:8.7px"><span class="u">R</span>eset <span class="u">Z</span>oom</div>
<div class="t" style="left:796px;top:549px;color:#222;font-size:8.7px"><span class="u">L</span>ast <span class="u">U</span>pdated:</div>
<div class="t" style="left:858px;top:549px;color:#222;font-size:8.7px">4/25/2022 10:15 <span class="u">AM</span></div>
<!-- play -->
<div class="a" style="left:418px;top:268px;width:82px;height:82px;border-radius:50%;background:#ff661d;box-shadow:0 5px 14px rgba(0,0,0,0.35)"></div>
<svg class="a" style="left:440px;top:285px" width="45" height="45" viewBox="0 0 45 45"><path d="M13.5 9.8Q11 8.5 11 11.3V34.7Q11 37.5 13.5 36.2L33.5 24.3Q36 22.8 33.5 21.4Z" fill="#fff" stroke="#fff" stroke-width="3" stroke-linejoin="round"/></svg>

</body></html>
